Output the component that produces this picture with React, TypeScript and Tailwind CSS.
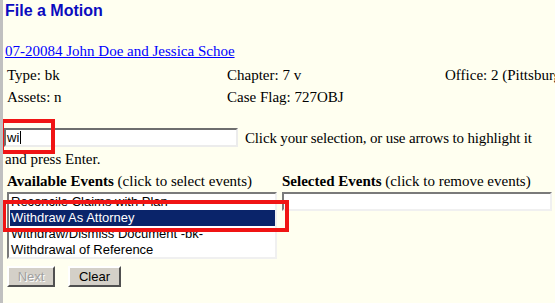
import React from "react";

export default function App() {
  const sans = "font-['Liberation_Sans',Arial,sans-serif]";
  return (
    <div className="relative w-[555px] h-[303px] overflow-hidden bg-[#fffff0] border-l-[3px] border-[#c0c0c0] font-['Liberation_Serif','Times_New_Roman',serif] text-[15px] leading-[17px] text-black whitespace-nowrap">
      <h1 className={`${sans} pt-[2px] pl-[2px] text-[16px] leading-[18px] font-bold text-[#0b0bbf]`}>
        File a Motion
      </h1>
      <div className="mt-[23px] pl-[2px]">
        <a className="text-[#0000ff] underline" href="#">
          07-20084 John Doe and Jessica Schoe
        </a>
      </div>
      <div className="mt-[7px] pl-[4px] grid grid-cols-[220px_218px_1fr] gap-y-[5px]">
        <div>Type: bk</div>
        <div>Chapter: 7 v</div>
        <div>Office: 2 (Pittsburgh)</div>
        <div>Assets: n</div>
        <div>Case Flag: 727OBJ</div>
        <div></div>
      </div>
      <div className="mt-[22px] pl-[1px] flex items-start">
        <div
          className={`${sans} w-[234px] h-[19px] bg-white border-2 border-t-[#6e6e6e] border-l-[#6e6e6e] border-r-[#ececec] border-b-[#ececec] flex items-center pl-[1px] text-[13px] leading-[15px]`}
        >
          <span>wi</span>
          <span className="inline-block w-[1px] h-[13px] bg-black ml-[1px]" />
        </div>
        <div className="ml-[7px] mt-[2px] tracking-[-0.15px]">
          Click your selection, or use arrows to highlight it
        </div>
      </div>
      <div className="mt-[4px] pl-[2px]">and press Enter.</div>
      <div className="mt-[5px] pl-[4px] flex gap-[5px]">
        <div className="w-[270px] shrink-0">
          <div>
            <b>Available Events</b> (click to select events)
          </div>
          <div
            className={`${sans} mt-[2px] h-[67px] bg-white border-2 border-t-[#7a7a7a] border-l-[#7a7a7a] border-r-[#f0f0f0] border-b-[#f0f0f0] overflow-hidden text-[13px] leading-[16px]`}
          >
            <div className="h-[16px] pl-[2px]">Reconcile Claims with Plan</div>
            <div className="h-[16px] pl-[1px] ml-[1px] bg-[#0a246a] text-white">
              Withdraw As Attorney
            </div>
            <div className="h-[16px] pl-[2px]">Withdraw/Dismiss Document -bk-</div>
            <div className="h-[16px] pl-[2px]">Withdrawal of Reference</div>
          </div>
        </div>
        <div className="w-[270px] shrink-0">
          <div>
            <b>Selected Events</b> (click to remove events)
          </div>
          <div className="mt-[2px] h-[19px] bg-white border-2 border-t-[#7a7a7a] border-l-[#7a7a7a] border-r-[#f0f0f0] border-b-[#f0f0f0]" />
        </div>
      </div>
      <div className={`${sans} mt-[7px] pl-[4px] flex gap-[13px] text-[13px]`}>
        <button
          disabled
          className="w-[48px] h-[21px] bg-[#d4d0c8] border-2 border-t-white border-l-white border-r-[#505050] border-b-[#505050] text-[#a0a0a0] [text-shadow:1px_1px_0_#ffffff]"
        >
          Next
        </button>
        <button className="w-[53px] h-[21px] bg-[#d4d0c8] border-2 border-t-white border-l-white border-r-[#505050] border-b-[#505050] text-black">
          Clear
        </button>
      </div>

      <div className="absolute left-[-3px] top-[119px] w-[55px] h-[35px] border-4 border-[#f01414]" />
      <div className="absolute left-[-1px] top-[200px] w-[287px] h-[32px] border-4 border-[#f01414]" />
    </div>
  );
}
